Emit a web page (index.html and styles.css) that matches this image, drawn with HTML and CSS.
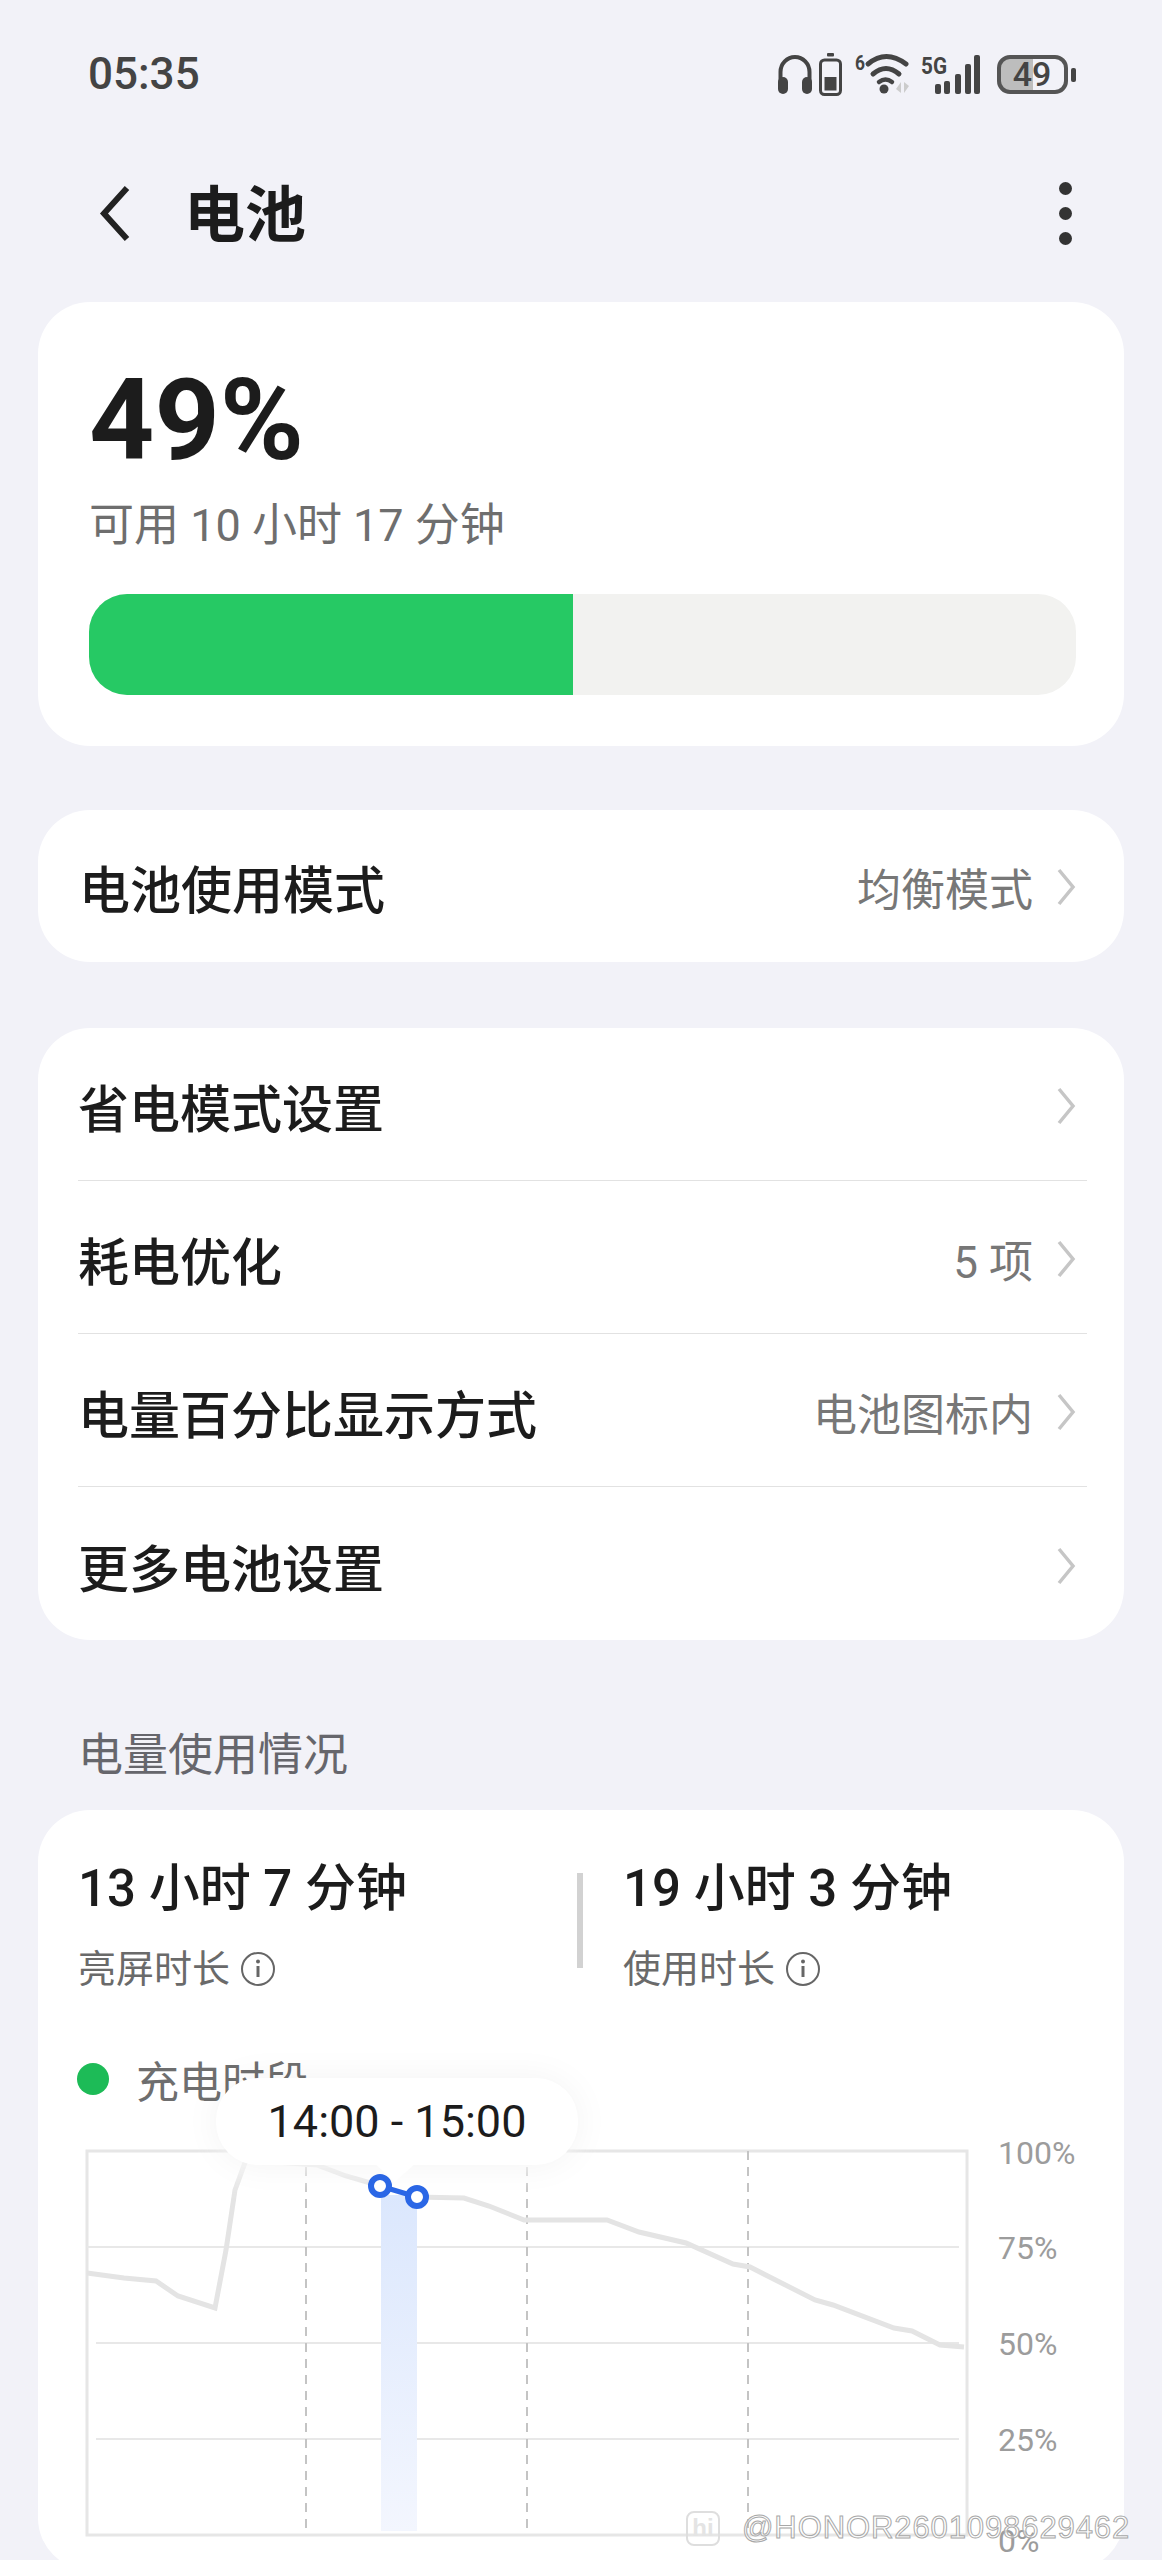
FILE: index.html
```html
<!DOCTYPE html>
<html lang="zh-CN">

<head>
  <meta charset="UTF-8">
  <meta name="viewport" content="width=device-width, initial-scale=1.0">
  <title>电池</title>
  <link rel="stylesheet" href="styles.css">
</head>

<body>
  <div class="status-bar">
    <div class="time">05:35</div>
    <div class="status-icons">
      <svg class="ic-headphones" width="36" height="40" viewBox="0 0 36 40">
        <path d="M3.5 30 V18 A14.5 15 0 0 1 32.5 18 V30" fill="none" stroke="#444" stroke-width="4"/>
        <rect x="1" y="23" width="10" height="17" rx="5" fill="#444"/>
        <rect x="25" y="23" width="10" height="17" rx="5" fill="#444"/>
      </svg>
      <svg class="ic-small-battery" width="23" height="43" viewBox="0 0 23 43">
        <rect x="8" y="0" width="7" height="3.5" rx="1" fill="#444"/>
        <rect x="1.5" y="7" width="20" height="34.5" rx="4" fill="none" stroke="#444" stroke-width="3"/>
        <rect x="5.5" y="24" width="12" height="13.5" fill="#444"/>
      </svg>
      <svg class="ic-wifi" width="55" height="43" viewBox="0 0 55 43">
        <text class="ic-label" x="0" y="17" font-size="21" textLength="10" lengthAdjust="spacingAndGlyphs">6</text>
        <path d="M13 11 Q31 -4 51 11" fill="none" stroke="#444" stroke-width="5" stroke-linecap="round"/>
        <path d="M18 21 Q31 10 44 21" fill="none" stroke="#444" stroke-width="5" stroke-linecap="round"/>
        <path d="M24 29 Q30.5 24 37 29" fill="none" stroke="#444" stroke-width="4.5" stroke-linecap="round"/>
        <circle cx="29" cy="36" r="4.5" fill="#444"/>
        <path d="M46 29 V40 L41 36 Z M49 29 V40 L54 33 Z" fill="#ccc"/>
      </svg>
      <svg class="ic-signal" width="59" height="40" viewBox="0 0 59 40">
        <text class="ic-label" x="0" y="20" font-size="24" textLength="26" lengthAdjust="spacingAndGlyphs">5G</text>
        <rect x="14" y="30" width="6" height="10" rx="2" fill="#444"/>
        <rect x="23" y="27" width="6" height="13" rx="2" fill="#444"/>
        <rect x="34" y="20" width="6" height="20" rx="2" fill="#444"/>
        <rect x="44" y="10" width="6" height="30" rx="2" fill="#444"/>
        <rect x="53" y="1" width="6" height="39" rx="2" fill="#444"/>
      </svg>
      <svg class="ic-battery" width="79" height="39" viewBox="0 0 79 39">
        <path d="M13 2 H36 V37 H13 A11 11 0 0 1 2 26 V13 A11 11 0 0 1 13 2 Z" fill="#bdbdbd"/>
        <rect x="2" y="2" width="67" height="35" rx="11" fill="none" stroke="#555" stroke-width="4"/>
        <text class="ic-batt-num" x="35" y="31" font-size="34" text-anchor="middle">49</text>
        <rect x="74" y="13" width="5" height="14" rx="2" fill="#444"/>
      </svg>
    </div>
  </div>

  <div class="header">
    <svg class="back" width="31" height="57" viewBox="0 0 31 57">
      <polyline points="28,3 5,28.5 28,54" fill="none" stroke="#222" stroke-width="6"/>
    </svg>
    <h1>电池</h1>
    <div class="more"><span></span><span></span><span></span></div>
  </div>

  <div class="content">
    <div class="card battery-card">
      <div class="percent">49%</div>
      <div class="remaining">可用 10 小时 17 分钟</div>
      <div class="level-bar">
        <div class="level-fill"></div>
      </div>
    </div>

    <div class="card single-card">
      <div class="row">
        <div class="row-title">电池使用模式</div>
        <div class="row-right">
          <span class="row-value">均衡模式</span>
          <svg class="chev" width="20" height="38" viewBox="0 0 20 38"><polyline points="3,2 17,19 3,36"/></svg>
        </div>
      </div>
    </div>

    <div class="card list-card">
      <div class="row">
        <div class="row-title">省电模式设置</div>
        <div class="row-right">
          <svg class="chev" width="20" height="38" viewBox="0 0 20 38"><polyline points="3,2 17,19 3,36"/></svg>
        </div>
      </div>
      <div class="row">
        <div class="row-title">耗电优化</div>
        <div class="row-right">
          <span class="row-value">5 项</span>
          <svg class="chev" width="20" height="38" viewBox="0 0 20 38"><polyline points="3,2 17,19 3,36"/></svg>
        </div>
      </div>
      <div class="row">
        <div class="row-title">电量百分比显示方式</div>
        <div class="row-right">
          <span class="row-value">电池图标内</span>
          <svg class="chev" width="20" height="38" viewBox="0 0 20 38"><polyline points="3,2 17,19 3,36"/></svg>
        </div>
      </div>
      <div class="row">
        <div class="row-title">更多电池设置</div>
        <div class="row-right">
          <svg class="chev" width="20" height="38" viewBox="0 0 20 38"><polyline points="3,2 17,19 3,36"/></svg>
        </div>
      </div>
    </div>

    <div class="section-title">电量使用情况</div>

    <div class="card usage-card">
      <div class="stats">
        <div class="stat stat-left">
          <div class="stat-value">13 小时 7 分钟</div>
          <div class="stat-label">亮屏时长
            <svg class="info" width="36" height="36" viewBox="0 0 36 36">
              <circle cx="18" cy="18" r="16" fill="none" stroke="#666" stroke-width="2"/>
              <circle cx="18" cy="10.5" r="2" fill="#666"/>
              <path d="M18 15 V26" stroke="#666" stroke-width="3"/>
            </svg>
          </div>
        </div>
        <div class="stat-divider"></div>
        <div class="stat">
          <div class="stat-value">19 小时 3 分钟</div>
          <div class="stat-label">使用时长
            <svg class="info" width="36" height="36" viewBox="0 0 36 36">
              <circle cx="18" cy="18" r="16" fill="none" stroke="#666" stroke-width="2"/>
              <circle cx="18" cy="10.5" r="2" fill="#666"/>
              <path d="M18 15 V26" stroke="#666" stroke-width="3"/>
            </svg>
          </div>
        </div>
      </div>

      <div class="legend">
        <span class="legend-dot"></span>
        <span class="legend-text">充电时段</span>
      </div>

      <svg class="chart" width="1086" height="420" viewBox="38 2140 1086 420">
        <defs>
          <linearGradient id="band" x1="0" y1="0" x2="0" y2="1">
            <stop offset="0" stop-color="#dbe7fd"/>
            <stop offset="1" stop-color="#f3f6fe"/>
          </linearGradient>
          <filter id="soft" x="-20%" y="-100%" width="140%" height="300%">
            <feGaussianBlur stdDeviation="12"/>
          </filter>
        </defs>
        <rect x="87" y="2151" width="880" height="384" fill="none" stroke="#e6e6e6" stroke-width="3"/>
        <path class="grid" d="M87 2247 H959 M96 2343 H959 M96 2439 H959"/>
        <path class="grid-dash" d="M306 2151 V2535 M527 2151 V2535 M748 2151 V2535"/>
        <rect x="381" y="2195" width="36" height="336" fill="url(#band)"/>
        <polyline class="power-line" points="87,2273 124,2278 156,2281 178,2296 215,2308 226,2250 235,2190 246,2160 317,2165 346,2176 381,2186"/>
        <polyline class="power-line" points="417,2197 464,2198 489,2206 524,2220 607,2220 639,2232 686,2243 733,2264 750,2267 815,2300 833,2305 894,2328 912,2331 940,2345 964,2347"/>
        <!-- white haze the tooltip leaves on the lines -->
        <rect x="220" y="2140" width="354" height="36" fill="#fff" opacity="0.85" filter="url(#soft)"/>
        <line x1="380" y1="2186" x2="417" y2="2197" stroke="#2b67e6" stroke-width="5"/>
        <circle class="point" cx="380" cy="2186" r="9"/>
        <circle class="point" cx="417" cy="2197" r="9"/>
        <text class="axis" x="998" y="2164">100%</text>
        <text class="axis" x="998" y="2259">75%</text>
        <text class="axis" x="998" y="2355">50%</text>
        <text class="axis" x="998" y="2451">25%</text>
        <text class="axis" x="998" y="2552">0%</text>
      </svg>

      <div class="tooltip">14:00 - 15:00</div>
    </div>
  </div>

  <div class="watermark">
    <span class="wm-logo">hi</span>
    <span class="wm-text">@HONOR2601098629462</span>
  </div>
</body>

</html>
```

FILE: styles.css
```css
html,
body {
  margin: 0;
  padding: 0;
  height: 2560px;
  overflow: hidden;
}

body {
  position: relative;
  font-family: Roboto, 'Noto Sans CJK SC', sans-serif;
  background-color: #f2f2f8;
  color: #1c1c1c;
}

svg {
  overflow: visible;
}

.status-bar {
  height: 148px;
  display: flex;
  justify-content: space-between;
  align-items: center;
  padding: 0 86px 0 88px;
}

.time {
  font-size: 44px;
  font-weight: 500;
  color: #444444;
}

.status-icons {
  display: flex;
  align-items: center;
}

.ic-headphones {
  margin-right: 6px;
}

.ic-small-battery {
  margin-right: 13px;
}

.ic-wifi {
  margin-right: 11px;
}

.ic-signal {
  margin-right: 17px;
}

.ic-label {
  font-family: Roboto, sans-serif;
  font-weight: 700;
  fill: #444444;
}

.ic-batt-num {
  font-family: Roboto, sans-serif;
  font-weight: 500;
  fill: #444444;
}

.header {
  height: 130px;
  display: flex;
  align-items: center;
  padding: 0 90px 0 99px;
}

.header h1 {
  flex: 1;
  margin: 0 0 6px 54px;
  font-size: 61px;
  font-weight: 700;
  color: #1c1c1c;
}

.more {
  display: flex;
  flex-direction: column;
  gap: 12px;
}

.more span {
  width: 13px;
  height: 13px;
  border-radius: 50%;
  background-color: #333333;
}

.content {
  padding: 24px 38px 0;
}

.card {
  background-color: #ffffff;
  border-radius: 52px;
}

.battery-card {
  height: 444px;
  box-sizing: border-box;
  padding: 53px 48px 0 51px;
}

.percent {
  font-size: 114px;
  font-weight: 700;
  line-height: 130px;
}

.remaining {
  margin-top: 11px;
  font-size: 45px;
  line-height: 60px;
  color: #6e6e6e;
}

.level-bar {
  margin-top: 38px;
  height: 101px;
  border-radius: 38px;
  background-color: #f2f2f0;
  overflow: hidden;
}

.level-fill {
  width: 49%;
  height: 100%;
  background-color: #26c964;
}

.single-card {
  margin-top: 64px;
  padding-left: 41px;
}

.single-card .row {
  height: 152px;
  border-bottom: none;
  padding-top: 2px;
  margin-right: 37px;
}

.list-card {
  margin-top: 66px;
  padding-left: 40px;
}

.row {
  height: 153px;
  box-sizing: border-box;
  display: flex;
  justify-content: space-between;
  align-items: center;
  margin-right: 37px;
  padding-top: 4px;
  border-bottom: 1px solid #e2e2e2;
}

.list-card .row:last-child {
  border-bottom: none;
}

.row-title {
  font-size: 51px;
  font-weight: 500;
  color: #1c1c1c;
}

.row-right {
  display: flex;
  align-items: center;
  gap: 23px;
  margin-right: 11px;
}

.row-value {
  font-size: 44px;
  color: #777777;
}

.chev polyline {
  fill: none;
  stroke: #c6c6c6;
  stroke-width: 3.5;
}

.section-title {
  margin: 0 0 0 40px;
  padding-top: 87px;
  height: 83px;
  font-size: 45px;
  line-height: 58px;
  color: #66666c;
}

.usage-card {
  position: relative;
  height: 760px;
  box-sizing: border-box;
  padding-top: 47px;
}

.stats {
  display: flex;
  padding-left: 40px;
}

.stat-left {
  width: 499px;
}

.stat-value {
  font-size: 51px;
  font-weight: 500;
  line-height: 64px;
}

.stat-label {
  display: flex;
  align-items: center;
  gap: 10px;
  margin-top: 23px;
  font-size: 38px;
  line-height: 50px;
  color: #6a6a6a;
}

.stat-divider {
  width: 6px;
  height: 95px;
  margin: 16px 40px 0 0;
  background-color: #d2d2d2;
}

.legend {
  display: flex;
  align-items: center;
  gap: 27px;
  height: 60px;
  margin-top: 55px;
  padding-left: 39px;
}

.legend-dot {
  width: 32px;
  height: 32px;
  border-radius: 50%;
  background-color: #1dbb57;
}

.legend-text {
  font-size: 43px;
  color: #6e6e6e;
}

.chart {
  display: block;
  margin-top: 31px;
}

.grid {
  fill: none;
  stroke: #e8e8e8;
  stroke-width: 2;
}

.grid-dash {
  fill: none;
  stroke: #c4c4c4;
  stroke-width: 2;
  stroke-dasharray: 9 7;
}

.power-line {
  fill: none;
  stroke: #e4e4e4;
  stroke-width: 5;
}

.point {
  fill: #ffffff;
  stroke: #2b67e6;
  stroke-width: 6;
}

.axis {
  font-family: Roboto, sans-serif;
  font-size: 32px;
  fill: #9c9c9c;
}

.tooltip {
  position: absolute;
  left: 178px;
  top: 268px;
  width: 362px;
  height: 87px;
  display: flex;
  justify-content: center;
  align-items: center;
  border-radius: 42px;
  background-color: #ffffff;
  box-shadow: 0 0 36px rgba(0, 0, 0, 0.05);
  font-size: 45px;
  color: #1c1c1c;
}

.tooltip::after {
  content: '';
  position: absolute;
  left: 159px;
  top: 86px;
  border-style: solid;
  border-width: 18px 20px 0;
  border-color: #ffffff transparent transparent;
}

.watermark {
  position: absolute;
  left: 686px;
  top: 2510px;
  display: flex;
  align-items: center;
  gap: 22px;
}

.wm-logo {
  width: 34px;
  height: 35px;
  display: flex;
  justify-content: center;
  align-items: center;
  border: 2px solid #dedede;
  border-radius: 8px;
  box-sizing: border-box;
  font-family: 'Liberation Sans', sans-serif;
  font-size: 24px;
  font-weight: 700;
  color: #e4e4e4;
}

.wm-text {
  font-family: 'Liberation Sans', sans-serif;
  font-size: 31px;
  letter-spacing: 0.9px;
  color: rgba(255, 255, 255, 0.6);
  -webkit-text-stroke: 1px #a8a8a8;
}
```
